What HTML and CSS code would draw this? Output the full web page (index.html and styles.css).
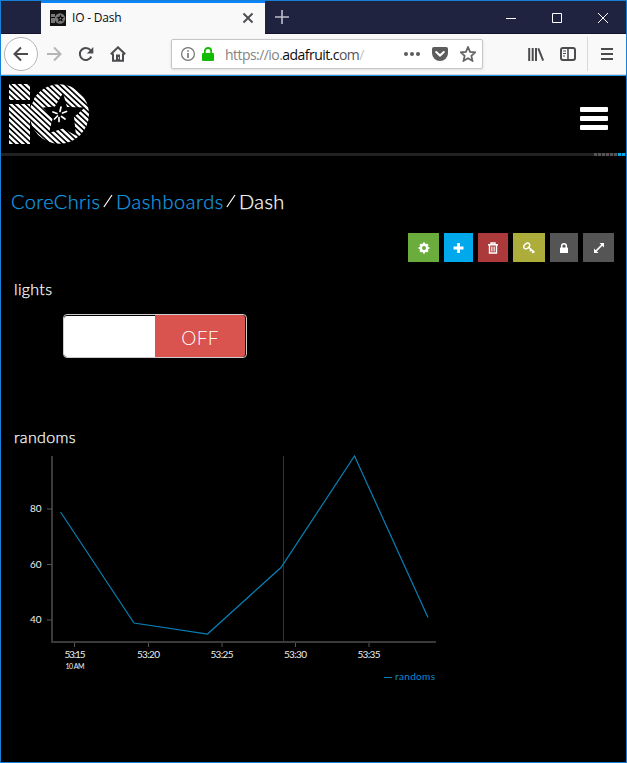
FILE: index.html
```html
<!DOCTYPE html>
<html lang="en">
<head>
<meta charset="utf-8">
<title>IO - Dash</title>
<link rel="stylesheet" href="styles.css">
</head>
<body>
<div class="window">
  <div class="tabs">
    <div class="tab">
      <svg class="favicon" viewBox="0 0 16 16"><rect width="16" height="16" fill="#111"/><path d="M1 4h4v3H1zM1 8h4v5H1z" fill="#777"/><circle cx="10" cy="8.500" r="5.200" fill="#777"/><path d="M10.500 4.500l.9 2.600 2.800.2-2.200 1.600.8 2.900-2.400-1.500-2.400 1.600.7-2.900-2.200-1.800 2.800-.1z" fill="#000"/><circle cx="10.400" cy="8.400" r=".9" fill="#888"/></svg>
      <span class="tab-title">IO - Dash</span>
      <svg class="tab-close" viewBox="0 0 12 12"><path d="M1.500 1.500l9 9M10.500 1.500l-9 9"/></svg>
    </div>
    <svg class="new-tab" viewBox="0 0 14 14"><path d="M7 0v14M0 7h14"/></svg>
    <div class="controls">
      <svg viewBox="0 0 10 10"><path d="M0 5.500h10"/></svg>
      <svg viewBox="0 0 10 10"><path d="M.5.5h9v9h-9z"/></svg>
      <svg viewBox="0 0 10 10"><path d="M0 0l10 10M10 0L0 10"/></svg>
    </div>
  </div>
  <div class="toolbar">
    <div class="back"><svg viewBox="0 0 16 16"><path d="M15 8H1.500M8 1.500L1.500 8 8 14.500"/></svg></div>
    <svg class="nav forward" viewBox="0 0 16 16"><path d="M1 8h13.500M8 1.500L14.500 8 8 14.500"/></svg>
    <svg class="nav reload" viewBox="0 0 16 16"><path d="M13.300 10.500A6 6 0 1 1 12.500 4.200"/><path class="solid" d="M15.300 1v6.500H8.800z"/></svg>
    <svg class="nav home" viewBox="0 0 16 16"><path d="M.8 8.200L8 1.300l7.200 6.900M3 7.500v7.300h10V7.500"/><path class="solid" d="M6 8.500h4V15H6z"/><path d="M8.500 11v2" stroke="#ccc" stroke-width="1"/></svg>
    <div class="address">
      <svg class="info" viewBox="0 0 14 14"><circle cx="7" cy="7" r="6.400"/><path d="M7 6v5M7 3.200v1.600" stroke-width="1.600"/></svg>
      <svg class="lock" viewBox="0 0 12 14"><path d="M2.800 7V4.200a3.200 3.200 0 0 1 6.400 0V7" fill="none" stroke="#12bc00" stroke-width="1.800"/><rect y="6" width="12" height="8" rx="1" fill="#12bc00"/></svg>
      <span class="url">https://io.<b>adafruit.c</b><span class="fade1">om</span><span class="fade2">/</span></span>
      <svg class="dots" viewBox="0 0 16 4"><circle cx="2" cy="2" r="2"/><circle cx="8" cy="2" r="2"/><circle cx="14" cy="2" r="2"/></svg>
      <svg class="pocket" viewBox="0 0 16 14"><path d="M2 0h12a2 2 0 0 1 2 2v4a8 8 0 0 1-16 0V2a2 2 0 0 1 2-2z" fill="#5c5c5c"/><path d="M4.200 5L8 8.600 11.800 5" fill="none" stroke="#fff" stroke-width="2" stroke-linecap="round"/></svg>
      <svg class="star" viewBox="0 0 16 16"><path d="M8 1.200l2.100 4.600 5 .6-3.700 3.400 1 5L8 12.300l-4.400 2.500 1-5L.9 6.400l5-.6z"/></svg>
    </div>
    <svg class="library" viewBox="0 0 16 14"><path d="M1.200 1v13M4.700 1v13M8 1v13M10.300 1.300L15.200 13.600"/></svg>
    <svg class="sidebar" viewBox="0 0 16 14"><rect x="1" y="1" width="14" height="12" rx="2" stroke-width="2"/><path d="M8 1v12" stroke-width="1.600"/><path d="M3 4h3M3 6.500h3M3 9h2" stroke-width="1"/></svg>
    <div class="menu"><svg viewBox="0 0 12 12"><path d="M0 1h12M0 6h12M0 11h12"/></svg></div>
  </div>
  <header class="site-header">
    <svg class="logo" viewBox="0 0 82 62">
      <defs><pattern id="stripe" width="4.100" height="4.100" patternUnits="userSpaceOnUse" patternTransform="rotate(43)"><rect width="4.100" height="2.500" fill="#fff"/></pattern></defs>
      <path d="M0 0h21v16H0zM0 20h21v40H0z" fill="url(#stripe)"/>
      <circle cx="50.300" cy="30" r="29.700" fill="url(#stripe)"/>
      <path d="M21 16h4l-2 4h-2z" fill="#000"/>
      <path d="M54 9l4 14 18 .5-11 9.500 2 18.500-13-7-14 4.500 3.500-14L34 23.500l12-1z" fill="#000"/>
      <path d="M51 27.500l1-4.500M53.500 29l4-1.500M52.500 32.500l3.500 2.500M50 33.500v4M48 29.500l-4-1.500M48.500 32l-3 3" fill="none" stroke="#fff" stroke-width="1.700" stroke-linecap="round"/>
    </svg>
    <svg class="hamburger" viewBox="0 0 28 24"><rect width="28" height="5" rx="1"/><rect y="9" width="28" height="5" rx="1"/><rect y="18" width="28" height="5" rx="1"/></svg>
  </header>
  <div class="strip"><i></i><i></i><i></i><i></i><i></i><i></i><i class="on"></i><i class="on"></i></div>
  <main>
    <h1 class="crumbs"><span class="link c1">CoreChris</span><svg viewBox="0 0 10 16"><path d="M.9 14L9 2"/></svg><span class="link c2">Dashboards</span><svg viewBox="0 0 10 16"><path d="M.9 14L9 2"/></svg><span class="c3">Dash</span></h1>
    <div class="actions">
      <div class="btn green"><svg viewBox="0 0 12 12"><circle cx="6" cy="6" r="3.200" fill="none" stroke="#fff" stroke-width="2.400"/><path d="M6 .6v2M6 9.400v2M.6 6h2M9.400 6h2M2.200 2.200l1.300 1.300M8.500 8.500l1.300 1.300M9.800 2.200L8.500 3.500M3.500 8.500L2.200 9.800" stroke="#fff" stroke-width="2.200"/></svg></div>
      <div class="btn blue"><svg viewBox="0 0 12 12"><path d="M5.500 1v10M.5 6h10" stroke="#fff" stroke-width="2.800"/></svg></div>
      <div class="btn red"><svg viewBox="0 0 12 12"><path d="M1 2.800h10M4 2.500V1h4v1.500M2.500 3v8h7V3" fill="none" stroke="#fff" stroke-width="1.400"/><path d="M4.600 4.500v5M6 4.500v5M7.400 4.500v5" stroke="#fff" stroke-width=".8"/></svg></div>
      <div class="btn yellow"><svg viewBox="0 0 12 12"><ellipse cx="3.700" cy="4" rx="3.300" ry="2.300" transform="rotate(-40 3.700 4)" fill="none" stroke="#fff" stroke-width="1.500"/><path d="M5.500 5.300l6 5M8.200 7.700L7 9.200M10.500 9.500l-1.300 1.600" stroke="#fff" stroke-width="1.500"/></svg></div>
      <div class="btn grey narrow"><svg viewBox="0 0 12 12"><path d="M3.700 6V4a2.300 2.300 0 0 1 4.600 0v2" fill="none" stroke="#fff" stroke-width="1.500"/><rect x="2" y="5.500" width="8" height="5.500" rx=".6" fill="#fff"/></svg></div>
      <div class="btn grey"><svg viewBox="0 0 12 12"><path d="M3 9l6-6" stroke="#fff" stroke-width="1.700"/><path d="M6.500 1H11v4.500zM1 6.500V11h4.500z" fill="#fff"/></svg></div>
    </div>
    <h2 class="name lights">lights</h2>
    <div class="toggle"><div class="knob"></div><div class="off"><span>OFF</span></div></div>
    <h2 class="name randoms">randoms</h2>
    <svg class="chart" width="450" height="240" viewBox="0 450 450 240">
      <path class="cursor" d="M283.500 456v186"/>
      <path class="axis" d="M52 456v186h384"/>
      <path class="tick" d="M47 509h5M47 564.500h5M47 620h5M74.500 643v4M148.500 643v4M222 643v4M295.500 643v4M369 643v4"/>
      <path class="series" d="M60.500 512L134 623l73.500 11L281 567.500 354.500 456 428 617.500"/>
      <g class="labels">
        <text x="41.500" y="512" text-anchor="end">80</text><text x="41.500" y="568" text-anchor="end">60</text><text x="41.500" y="623" text-anchor="end">40</text>
        <text x="64.500" y="658" textLength="21">53:15</text><text x="137" y="658" textLength="23">53:20</text><text x="210.500" y="658" textLength="23">53:25</text><text x="284" y="658" textLength="23">53:30</text><text x="357.500" y="658" textLength="23">53:35</text>
        <text class="small" x="65.500" y="669" textLength="19">10 AM</text>
        <text class="legend" x="395" y="680" textLength="40">randoms</text>
      </g>
      <path class="legend-line" d="M384 677.500h8"/>
    </svg>
  </main>
</div>
</body>
</html>
```
FILE: styles.css
```css
* { box-sizing: border-box; }
body { margin: 0; background: #000; }
svg { display: block; flex: none; }
.window { width: 627px; height: 763px; border: 1px solid #1680d8; background: #000; overflow: hidden; font-family: Lato, sans-serif; color: #fff; }

.tabs { display: flex; height: 33px; background: #202340; border-bottom: 1px solid #17122f; }
.tab { display: flex; align-items: center; width: 224px; height: 33px; margin-left: 40px; padding: 0 11px 2px 9px; background: #f9f9fa; border-top: 2px solid #0a84ff; }
.favicon { width: 16px; height: 16px; }
.tab-title { flex: 1; padding-left: 6px; font: 12px "Open Sans", sans-serif; letter-spacing: -.2px; color: #0c0c0d; }
.tab-close { width: 12px; height: 12px; stroke: #4a4a4f; stroke-width: 1.8; }
.new-tab { width: 14px; height: 14px; margin: 9px 0 0 10px; stroke: #bfc0c9; stroke-width: 1.6; }
.controls { display: flex; gap: 36px; margin: 12px 18px 0 auto; }
.controls svg { width: 10px; height: 10px; fill: none; stroke: #fff; stroke-width: 1; overflow: visible; }

.toolbar { display: flex; align-items: center; height: 42px; padding: 0 0 2px 3px; background: #f9f9fa; border-bottom: 1px solid #1a9be8; box-shadow: inset 0 -1px #d8d8dc; }
.back { display: flex; align-items: center; justify-content: center; width: 34px; height: 34px; border: 1px solid #b5b5b8; border-radius: 50%; background: #fff; }
.back svg, .nav { width: 16px; height: 16px; fill: none; stroke: #4c4c4f; stroke-width: 2; }
.nav.forward { margin-left: 8px; stroke: #b5b5b7; }
.nav.reload { margin-left: 16px; }
.nav.home { margin-left: 16px; }
.solid { fill: #4c4c4f; stroke: none; }
.address { display: flex; align-items: center; width: 312px; height: 30px; margin-left: 45px; padding-left: 9px; border: 1px solid #c6c6c8; border-radius: 2px; background: #fff; box-shadow: 0 1px 3px #ddd; }
.info { width: 14px; height: 14px; fill: none; stroke: #737373; stroke-width: 1.2; }
.lock { width: 12px; height: 14px; margin-left: 7px; }
.url { width: 149px; margin: 2px 0 0 11px; white-space: nowrap; font: 14px/20px "Open Sans", sans-serif; letter-spacing: -.55px; color: #858585; }
.url b { font-weight: 400; color: #0c0c0d; }
.fade1 { color: #555; }
.fade2 { color: #c4c4c4; }
.dots { width: 16px; height: 4px; margin-left: 30px; fill: #5c5c5c; }
.pocket { width: 16px; height: 14px; margin-left: 12px; }
.star { width: 16px; height: 16px; margin-left: 12px; fill: none; stroke: #666; stroke-width: 1.8; }
.library { width: 16px; height: 14px; margin-left: 45px; fill: none; stroke: #4c4c4f; stroke-width: 2; }
.sidebar { width: 16px; height: 14px; margin-left: 16px; fill: none; stroke: #4c4c4f; }
.menu { display: flex; align-items: center; height: 34px; margin-left: 11px; padding-left: 13px; border-left: 1px solid #d8d8da; }
.menu svg { width: 12px; height: 12px; stroke: #4c4c4f; stroke-width: 2; }

.site-header { display: flex; justify-content: space-between; height: 77px; padding: 8px 18px 0 8px; }
.logo { width: 82px; height: 62px; }
.hamburger { width: 28px; height: 24px; margin-top: 23px; fill: #fff; }
.strip { display: flex; justify-content: flex-end; gap: 1px; height: 3px; padding-right: 1px; background: #222; }
.strip i { width: 3px; height: 3px; background: #555; }
.strip .on { background: #00a9e8; }

.crumbs { display: flex; align-items: center; height: 28px; margin: 31px 0 0 10px; font-size: 20px; font-weight: 300; line-height: 28px; -webkit-text-stroke: .25px; }
.crumbs svg { width: 10px; height: 16px; margin: 0 3px; fill: none; stroke: #fff; stroke-width: 1.2; }
.crumbs span { white-space: nowrap; }
.link { color: #149ce0; }
.c1 { width: 89px; letter-spacing: .38px; }
.c2 { width: 107px; letter-spacing: .58px; }
.c3 { letter-spacing: .4px; }

.actions { display: flex; gap: 5px; height: 29px; margin: 18px 12px 0 0; justify-content: flex-end; }
.btn { display: flex; align-items: center; justify-content: center; width: 31px; height: 29px; }
.btn svg { width: 12px; height: 12px; }
.green { background: #6aad3c; }
.blue { width: 29px; background: #00a9ec; }
.red { width: 30px; background: #ad3a3a; }
.yellow { width: 32px; background: #adad3c; }
.grey { background: #555; }
.narrow { width: 28px; }

.name { height: 20px; margin: 0 0 0 13px; font-size: 16px; line-height: 20px; font-weight: 300; letter-spacing: .35px; -webkit-text-stroke: .25px; }
.lights { margin-top: 17px; }
.toggle { display: flex; width: 184px; height: 44px; margin: 15px 0 0 62px; padding-top: 1px; border: 1px solid #ccc; border-radius: 4px; overflow: hidden; }
.knob { width: 91px; background: #fff; border-radius: 3px 0 0 3px; }
.off { flex: 1; margin: -1px 1px 0 0; background: #d9534f; text-align: center; font-size: 19px; font-weight: 300; line-height: 45px; letter-spacing: .3px; border-radius: 0 3px 3px 0; }
.randoms { margin-top: 69px; }
.chart { margin: 3px 0 0 -1px; fill: none; }
.axis { stroke: #3a3a3a; stroke-width: 2; }
.tick { stroke: #555; }
.cursor { stroke: #333; }
.series { stroke: #0780b5; stroke-width: 1.2; }
.labels { fill: #eee; font-size: 10px; }
.small { font-size: 7px; }
.legend { fill: #0a8ad2; }
.legend-line { stroke: #0780b5; }
```
